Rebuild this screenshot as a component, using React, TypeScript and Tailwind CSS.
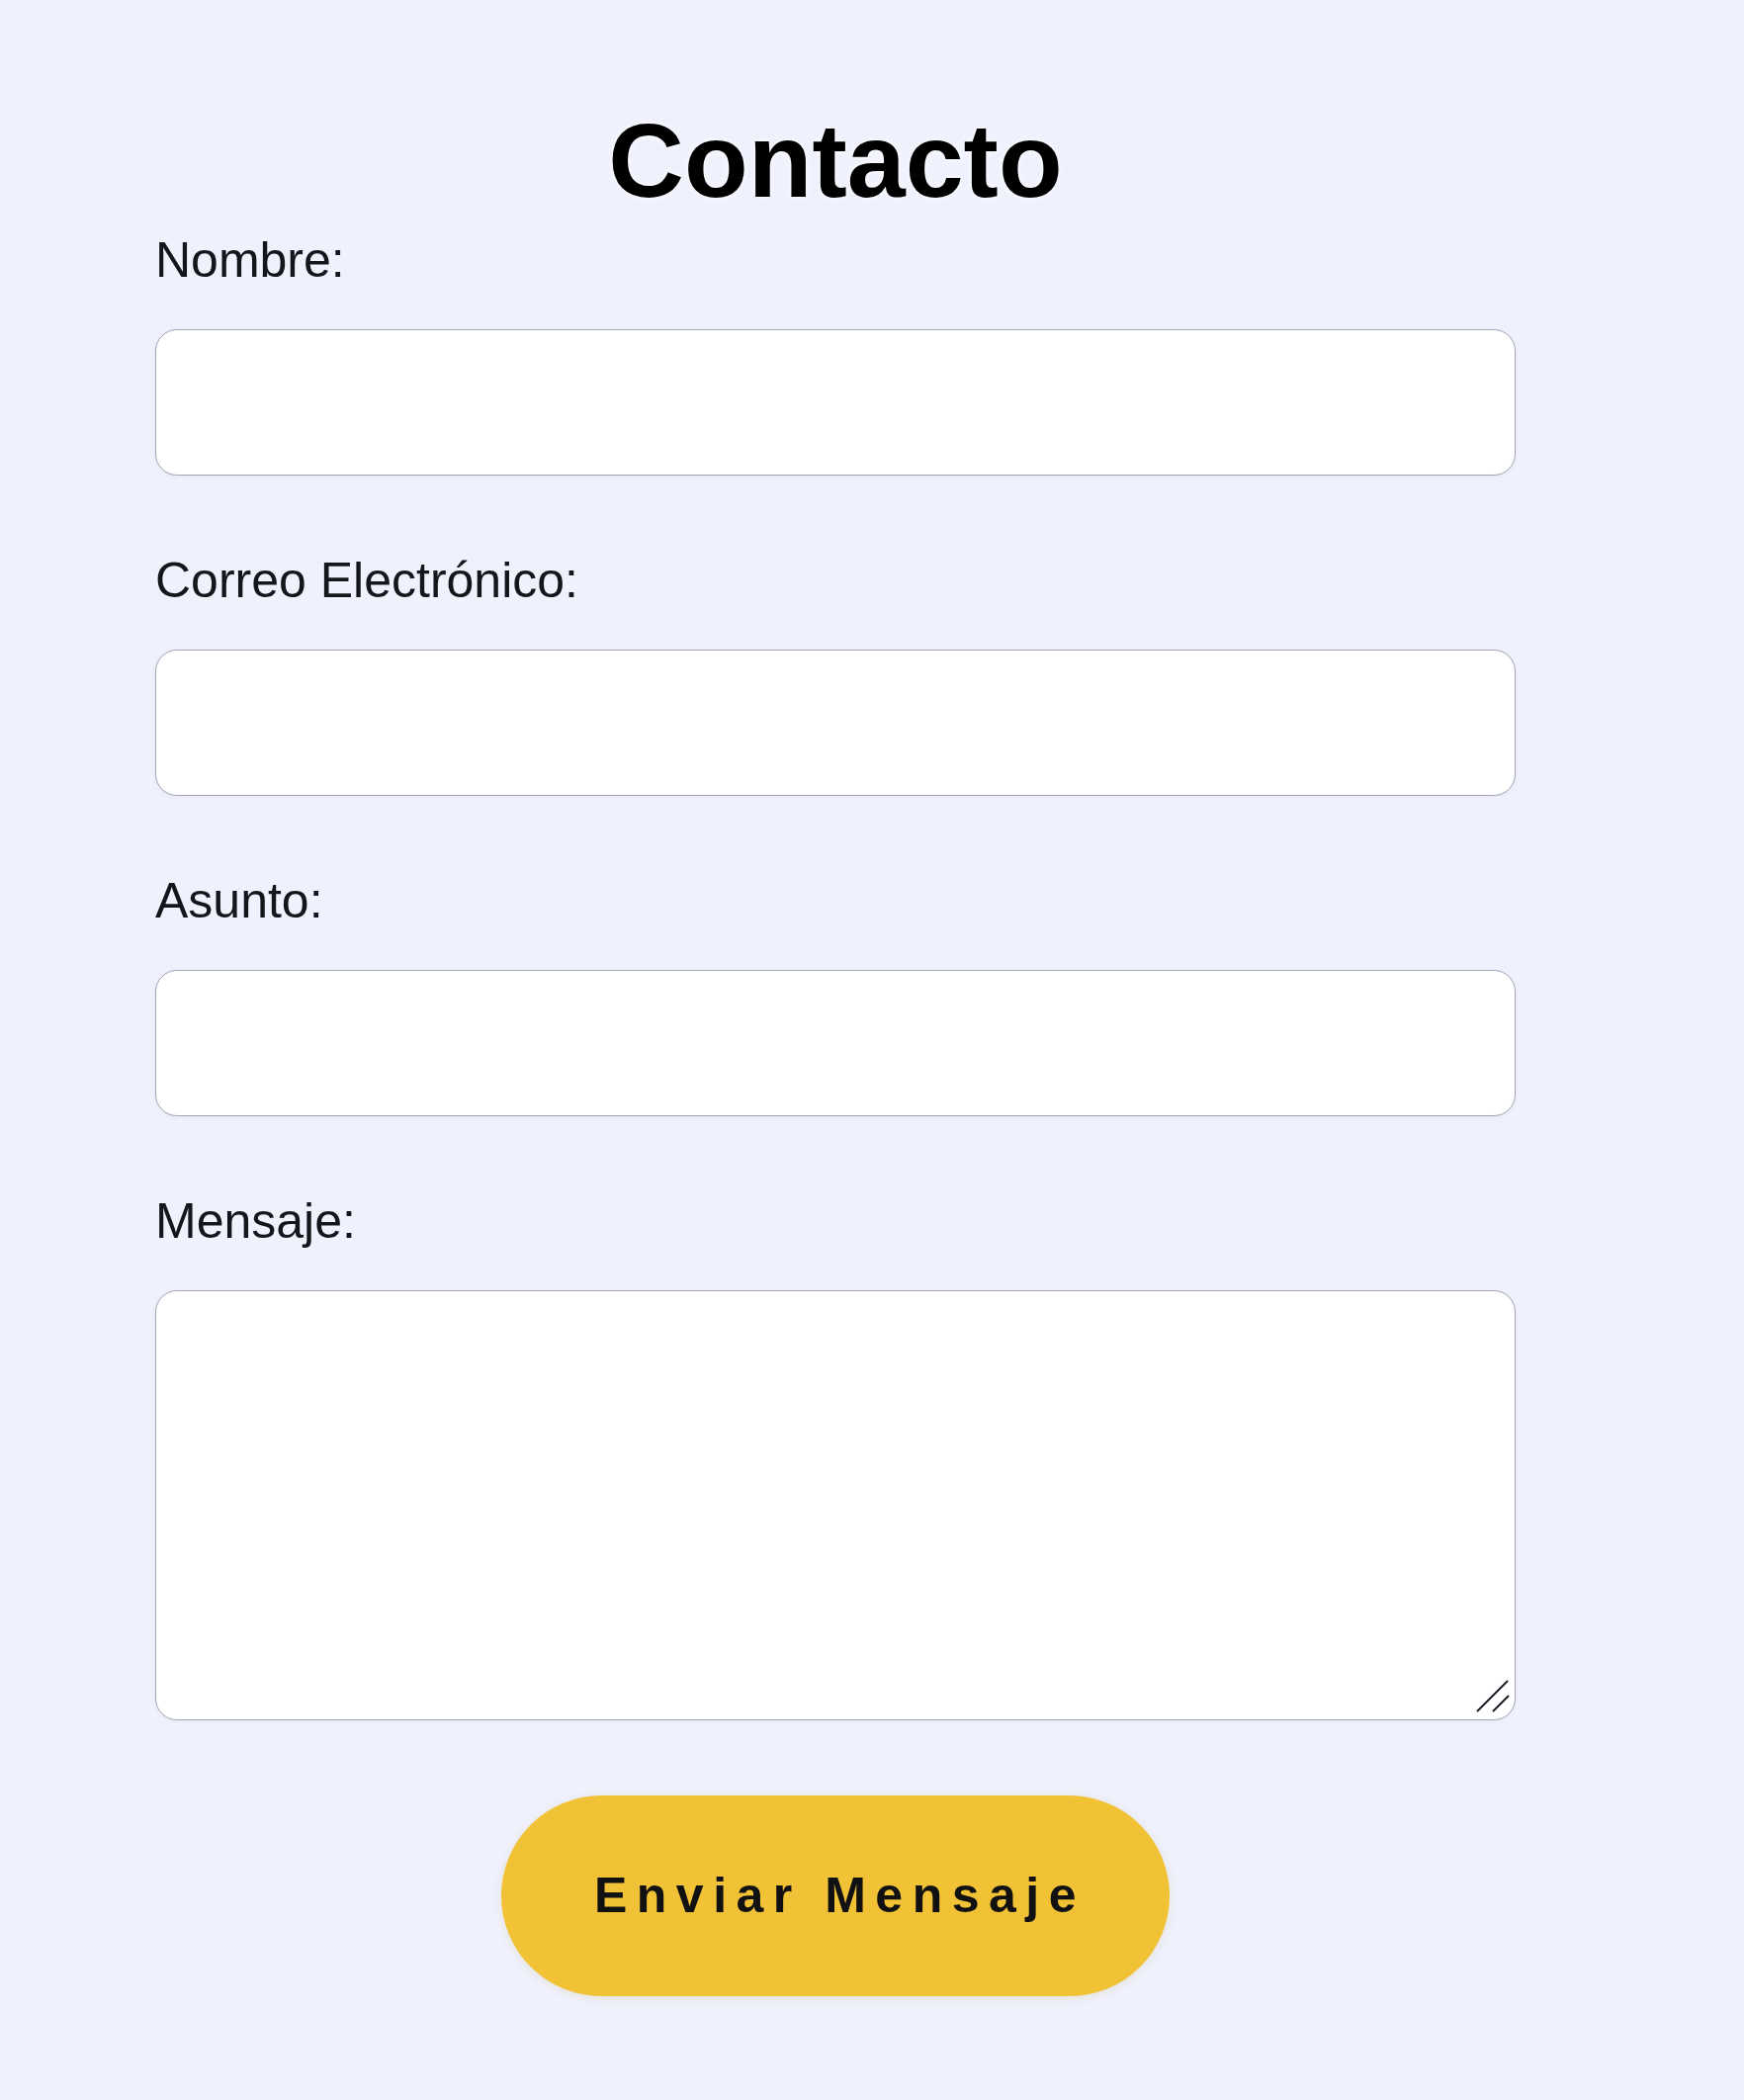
import { useState } from "react";

const fields = [
  { id: "nombre", label: "Nombre:", type: "text" },
  { id: "correo", label: "Correo Electrónico:", type: "email" },
  { id: "asunto", label: "Asunto:", type: "text" },
];

const App = () => {
  const [values, setValues] = useState<Record<string, string>>({});

  return (
    <div className="min-h-screen w-full bg-[#eff1fd] font-['Liberation_Sans',Arial,sans-serif] text-[#15151c]">
      <form
        className="ml-[157px] w-[1376px] pt-[99px] flex flex-col"
        onSubmit={(e) => e.preventDefault()}
      >
        <h1 className="text-center text-[106px] leading-[1.2] font-bold text-black [text-shadow:0_0_6px_#ffffff]">
          Contacto
        </h1>

        <div className="mt-[7px] flex flex-col">
          {fields.map((f) => (
            <div key={f.id} className="flex flex-col mb-[76px]">
              <label htmlFor={f.id} className="text-[50px] leading-[60px] mb-[40px]">
                {f.label}
              </label>
              <input
                id={f.id}
                type={f.type}
                value={values[f.id] ?? ""}
                onChange={(e) => setValues({ ...values, [f.id]: e.target.value })}
                className="h-[148px] w-full rounded-[22px] border-[1.5px] border-[#a4a4b3] bg-white px-6 text-[40px] outline-none shadow-[0_1px_4px_rgba(60,60,90,0.06)]"
              />
            </div>
          ))}

          <div className="flex flex-col">
            <label htmlFor="mensaje" className="text-[50px] leading-[60px] mb-[40px]">
              Mensaje:
            </label>
            <div className="relative">
              <textarea
                id="mensaje"
                value={values.mensaje ?? ""}
                onChange={(e) => setValues({ ...values, mensaje: e.target.value })}
                className="block h-[435px] w-full resize-none rounded-[22px] border-[1.5px] border-[#a4a4b3] bg-white px-6 py-4 text-[40px] outline-none shadow-[0_1px_4px_rgba(60,60,90,0.06)]"
              />
              {/* resize grip */}
              <svg
                className="pointer-events-none absolute bottom-[5px] right-[4px]"
                width="38"
                height="38"
                viewBox="0 0 38 38"
              >
                <line x1="3" y1="34" x2="34" y2="3" stroke="#1c1c24" strokeWidth="2" />
                <line x1="19" y1="34" x2="35" y2="18" stroke="#1c1c24" strokeWidth="2" />
              </svg>
            </div>
          </div>
        </div>

        <div className="mt-[76px] flex justify-center">
          <button
            type="submit"
            className="h-[203px] w-[676px] rounded-full bg-[#f1c136] text-[50px] font-bold tracking-[9.5px] text-[#111] pl-[9px] shadow-[0_2px_10px_rgba(200,160,40,0.18)]"
          >
            Enviar Mensaje
          </button>
        </div>
      </form>
    </div>
  );
};

export default App;
